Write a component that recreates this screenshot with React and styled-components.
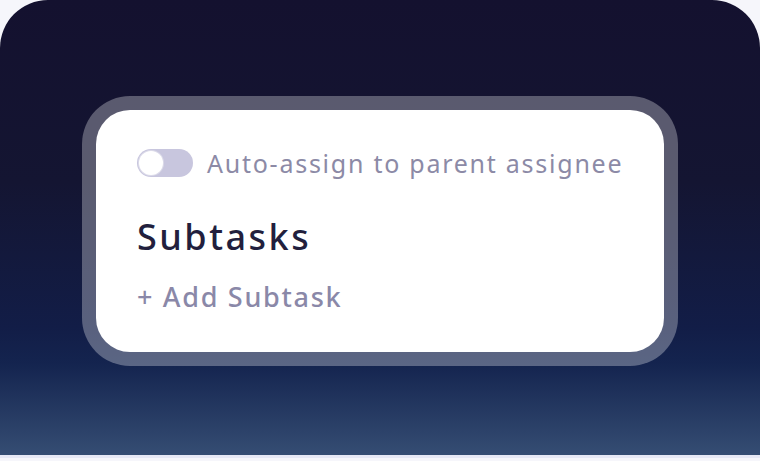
import styled, { createGlobalStyle } from "styled-components"

const GlobalStyle = createGlobalStyle`
  html, body {
    margin: 0;
    padding: 0;
    background: #eceef8;
  }
  body {
    font-family: "Noto Sans", "Open Sans", sans-serif;
  }
`

const Page = styled.div`
  width: 760px;
  height: 461px;
  background: #f6f6fb;
  display: flex;
  flex-direction: column;
`

const Panel = styled.div`
  height: 458px;
  border-radius: 48px 48px 0 0;
  background: linear-gradient(180deg, #14112f 0%, #141532 40%, #121d47 72%, #14244f 80%, #354d73 100%);
  border-bottom: 3px solid #e6e8f5;
  padding: 96px 0 0 82px;
  box-sizing: border-box;
`

const Frame = styled.div`
  width: 596px;
  height: 270px;
  box-sizing: border-box;
  padding: 14px;
  border-radius: 48px;
  background: rgba(255, 255, 255, 0.3);
`

const Card = styled.div`
  height: 100%;
  box-sizing: border-box;
  background: #ffffff;
  border-radius: 34px;
  padding: 39px 20px 0 41px;
  display: flex;
  flex-direction: column;
`

const ToggleRow = styled.label`
  display: flex;
  align-items: center;
  gap: 14px;
  height: 28px;
`

const Track = styled.span`
  position: relative;
  width: 56px;
  height: 28px;
  border-radius: 14px;
  background: ${props => (props.$on ? "#6c63ff" : "#c8c6de")};
  flex-shrink: 0;
`

const Knob = styled.span`
  position: absolute;
  top: 2px;
  left: ${props => (props.$on ? "30px" : "2px")};
  width: 24px;
  height: 24px;
  border-radius: 50%;
  background: #ffffff;
  box-shadow: 0 0 0 1px #dcdbe9;
`

const ToggleText = styled.span`
  font-size: 25px;
  color: #8c8aa6;
  letter-spacing: 1.75px;
  white-space: nowrap;
`

const Title = styled.h2`
  margin: 40px 0 0;
  font-size: 36px;
  line-height: 40px;
  font-weight: 500;
  color: #221f3d;
  letter-spacing: 2.5px;
`

const AddButton = styled.button`
  align-self: flex-start;
  margin-top: 23px;
  padding: 0;
  border: 0;
  background: none;
  font-family: inherit;
  font-size: 27px;
  line-height: 34px;
  font-weight: 500;
  color: #8a88a8;
  letter-spacing: 1.7px;
  cursor: pointer;
`

export default function App() {
  return (
    <Page>
      <GlobalStyle />
      <Panel>
        <Frame>
          <Card>
            <ToggleRow>
              <Track $on={false}>
                <Knob $on={false} />
              </Track>
              <ToggleText>Auto-assign to parent assignee</ToggleText>
            </ToggleRow>
            <Title>Subtasks</Title>
            <AddButton>+ Add Subtask</AddButton>
          </Card>
        </Frame>
      </Panel>
    </Page>
  )
}
